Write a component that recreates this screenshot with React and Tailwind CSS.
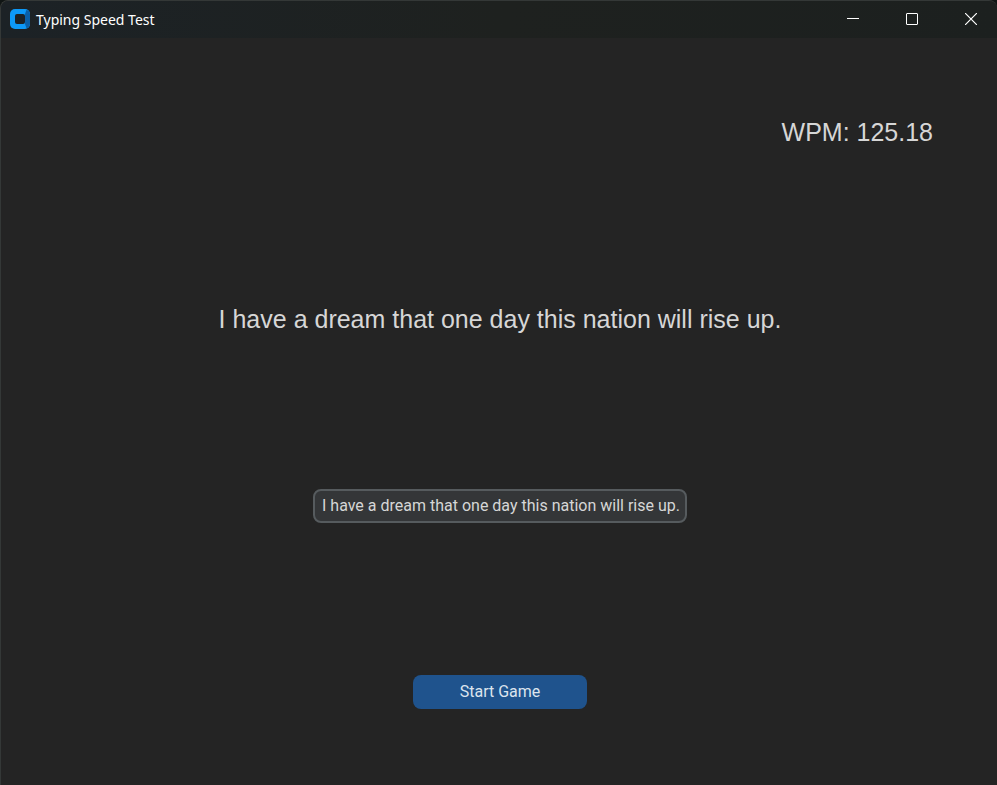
export default function App() {
  return (
    <div className="bg-[#101514]">
      <div className="flex min-h-screen flex-col overflow-hidden rounded-t-lg border-t border-l border-[#343837] bg-[#242424] text-[#d6d6d6]">
        <header className="flex h-[37px] shrink-0 items-center justify-between bg-linear-to-r from-[#1c2226] via-[#1e211f] to-[#1c201f] pl-2">
          <div className="flex items-center gap-1.5">
            <svg width="21" height="21" viewBox="0 0 21 21" aria-hidden="true">
              <rect x="1" y="0" width="20" height="20" rx="5" fill="#0d99f8" />
              <path d="M16 5l1.500-4.300a5 5 0 0 1 3.500 4.300v10a5 5 0 0 1-3.500 4.300L16 15z" fill="#0a5fa8" />
              <rect x="6" y="5" width="10" height="10" rx="2" fill="#1c2226" />
            </svg>
            <h1 className="font-['Noto_Sans',sans-serif] text-sm text-white">Typing Speed Test</h1>
          </div>
          <div className="flex h-full gap-[7px] pb-0.5 text-white">
            <button aria-label="Minimize" className="flex w-[52px] items-center justify-center">
              <svg width="12" height="12" viewBox="0 0 12 12" fill="none" stroke="currentColor"><path d="M0 5.500h12" /></svg>
            </button>
            <button aria-label="Maximize" className="flex w-[52px] items-center justify-center">
              <svg width="12" height="12" viewBox="0 0 12 12" fill="none" stroke="currentColor"><rect x="0.500" y="0.500" width="11" height="11" rx="0.500" /></svg>
            </button>
            <button aria-label="Close" className="flex w-[52px] items-center justify-center">
              <svg width="12" height="12" viewBox="0 0 12 12" fill="none" stroke="currentColor" strokeWidth="1.200"><path d="M0 0l12 12M12 0L0 12" /></svg>
            </button>
          </div>
        </header>
        <main className="grid flex-1 grid-rows-4 place-items-center pt-0.5 pr-[62px] pl-16">
          <p className="justify-self-end pr-0.5 font-['Liberation_Sans',Arial,sans-serif] text-[25px]">WPM: 125.18</p>
          <p className="font-['Liberation_Sans',Arial,sans-serif] text-[25px]">I have a dream that one day this nation will rise up.</p>
          <input
            aria-label="Type the sentence"
            defaultValue="I have a dream that one day this nation will rise up."
            className="h-[34px] w-[374px] rounded-lg border-2 border-[#565b5e] bg-[#343638] pr-1 pl-[7px] font-[Roboto,sans-serif] text-base outline-none"
          />
          <button className="h-[34px] w-[174px] rounded-lg bg-[#1f538d] font-[Roboto,sans-serif] text-base text-[#dce4ee]">Start Game</button>
        </main>
      </div>
    </div>
  );
}
